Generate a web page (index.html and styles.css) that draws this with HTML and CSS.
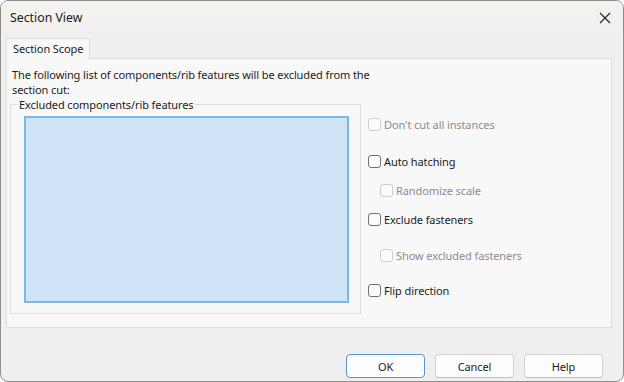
FILE: index.html
```html
<!DOCTYPE html>
<html>
<head>
<meta charset="utf-8">
<link rel="stylesheet" href="styles.css">
</head>
<body>
<div class="window">
  <div class="titlebar">
    <span class="title">Section View</span>
    <span class="close">
      <svg width="12" height="12" viewBox="0 0 12 12"><path d="M1 1 L11 11 M11 1 L1 11" stroke="#1f1f1f" stroke-width="1.1" fill="none"/></svg>
    </span>
  </div>
  <div class="tabs">
    <div class="tab">Section Scope</div>
  </div>
  <div class="panel">
    <p class="intro">The following list of components/rib features will be excluded from the<br>section cut:</p>
    <div class="content">
      <fieldset class="group">
        <legend>Excluded components/rib features</legend>
        <div class="listbox"></div>
      </fieldset>
      <div class="options">
        <label class="opt disabled r1"><span class="box"></span>Don't cut all instances</label>
        <label class="opt r2"><span class="box"></span>Auto hatching</label>
        <label class="opt disabled sub r3"><span class="box"></span>Randomize scale</label>
        <label class="opt r4"><span class="box"></span>Exclude fasteners</label>
        <label class="opt disabled sub r5"><span class="box"></span>Show excluded fasteners</label>
        <label class="opt r6"><span class="box"></span>Flip direction</label>
      </div>
    </div>
  </div>
  <div class="footer">
    <button class="btn default">OK</button>
    <button class="btn">Cancel</button>
    <button class="btn">Help</button>
  </div>
</div>
</body>
</html>
```
FILE: styles.css
```css
html, body {
  margin: 0;
  padding: 0;
  background: #ffffff;
}
body {
  font-family: "Noto Sans", "Open Sans", sans-serif;
  font-size: 11px;
  letter-spacing: -0.1px;
  color: #1b1b1b;
}
.window {
  width: 624px;
  height: 382px;
  box-sizing: border-box;
  border: 1px solid #8e8e8e;
  border-radius: 8px;
  background: #f0efef;
  display: flex;
  flex-direction: column;
  overflow: hidden;
}
.titlebar {
  height: 36px;
  flex: none;
  display: flex;
  align-items: center;
  justify-content: space-between;
  padding: 0 12px 3px 9px;
  box-sizing: border-box;
  background: linear-gradient(#f5f3ef, #f0efee);
}
.title {
  font-size: 12.3px;
  letter-spacing: 0;
  color: #1a1a1a;
}
.close {
  display: flex;
  width: 12px;
  height: 12px;
}
.tabs {
  display: flex;
  padding: 0 5px;
  margin-top: 1px;
  height: 20px;
  position: relative;
  z-index: 1;
}
.tab {
  height: 21px;
  box-sizing: border-box;
  padding: 2px 6px 0 6px;
  border: 1px solid #dcdcdc;
  border-bottom: none;
  background: #f9f8f9;
  line-height: 16px;
}
.panel {
  margin: 0 11px 0 5px;
  height: 270px;
  box-sizing: border-box;
  background: #f9f8f9;
  border: 1px solid #dcdcdc;
  padding: 8px 0 0 3px;
}
.intro {
  margin: 0;
  padding-left: 2px;
  line-height: 15px;
}
.content {
  display: flex;
  margin-top: 0;
}
.group {
  margin: 0;
  width: 351px;
  height: 217px;
  box-sizing: border-box;
  border: 1px solid #dedede;
  padding: 4px 11px 9px 13px;
}
.group legend {
  padding: 0 1px;
  margin-left: -6px;
  line-height: 15px;
}
.listbox {
  height: 187px;
  box-sizing: border-box;
  border: 2px solid #7cb8e6;
  background: #cfe3f7;
}
.options {
  display: flex;
  flex-direction: column;
  padding-left: 7px;
}
.opt {
  display: flex;
  align-items: center;
  height: 16px;
  gap: 3px;
  color: #1b1b1b;
}
.opt.disabled {
  color: #8c8c8c;
}
.opt.sub {
  padding-left: 12px;
}
.box {
  width: 13px;
  height: 13px;
  box-sizing: border-box;
  border: 1px solid #707070;
  border-radius: 3px;
  background: #fbfbfb;
}
.disabled .box {
  border-color: #cfcfcf;
}
.r1 { margin-top: 19px; }
.r2 { margin-top: 21px; }
.r3 { margin-top: 13px; }
.r4 { margin-top: 13px; }
.r5 { margin-top: 20px; }
.r6 { margin-top: 19px; }
.footer {
  display: flex;
  justify-content: flex-end;
  gap: 10px;
  padding: 26px 20px 0 0;
}
.btn {
  width: 79px;
  height: 24px;
  box-sizing: border-box;
  border: 1px solid #d2d2d2;
  border-bottom-color: #c0c0c0;
  border-radius: 4px;
  background: #fdfdfd;
  font-family: inherit;
  font-size: 11px;
  letter-spacing: -0.1px;
  color: #1b1b1b;
  padding: 0;
}
.btn.default {
  border: 1px solid #5a95cc;
}
```
